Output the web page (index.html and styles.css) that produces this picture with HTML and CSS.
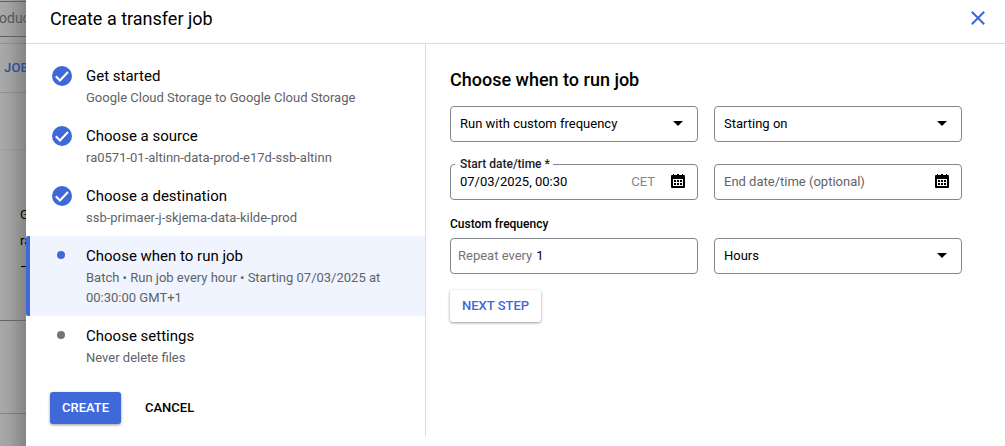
FILE: index.html
```html
<!DOCTYPE html>
<html lang="en">
<head>
<meta charset="utf-8">
<title>Create a transfer job</title>
<link rel="stylesheet" href="styles.css">
</head>
<body>
<div class="screen">
  <div class="backdrop">
    <div class="bg-row bg-filter"><span>oduc</span></div>
    <div class="bg-row bg-gap"></div>
    <div class="bg-row bg-actions"><span>E JOB</span></div>
    <div class="bg-row bg-head"></div>
    <div class="bg-row bg-item"><span class="bg-g">G</span><span class="bg-ra">ra</span><span class="bg-dash"></span></div>
    <div class="bg-row bg-foot"></div>
  </div>
  <main class="drawer">
    <header class="header">
      <h1>Create a transfer job</h1>
      <svg class="close" viewBox="0 0 14 14"><path d="M.8.8l12.4 12.4M13.2.8L.8 13.2"/></svg>
    </header>
    <div class="content">
      <nav class="sidebar">
        <section class="step">
          <svg class="check" viewBox="0 0 20 20"><circle cx="10" cy="10" r="10"/><path d="M3.8 10.3l4.2 4.2 8-8.5"/></svg>
          <div><h2>Get started</h2><p>Google Cloud Storage to Google Cloud Storage</p></div>
        </section>
        <section class="step">
          <svg class="check" viewBox="0 0 20 20"><circle cx="10" cy="10" r="10"/><path d="M3.8 10.3l4.2 4.2 8-8.5"/></svg>
          <div><h2>Choose a source</h2><p>ra0571-01-altinn-data-prod-e17d-ssb-altinn</p></div>
        </section>
        <section class="step">
          <svg class="check" viewBox="0 0 20 20"><circle cx="10" cy="10" r="10"/><path d="M3.8 10.3l4.2 4.2 8-8.5"/></svg>
          <div><h2>Choose a destination</h2><p>ssb-primaer-j-skjema-data-kilde-prod</p></div>
        </section>
        <section class="step active">
          <i class="dot"></i>
          <div><h2>Choose when to run job</h2><p>Batch • Run job every hour • Starting 07/03/2025 at<br>00:30:00 GMT+1</p></div>
        </section>
        <section class="step">
          <i class="dot"></i>
          <div><h2>Choose settings</h2><p>Never delete files</p></div>
        </section>
        <div class="actions">
          <button class="btn primary">CREATE</button>
          <button class="btn text">CANCEL</button>
        </div>
      </nav>
      <section class="form">
        <h2 class="form-title">Choose when to run job</h2>
        <div class="grid">
          <div class="field"><span>Run with custom frequency</span><svg class="arrow" viewBox="0 0 10 5"><path d="M0 0h10L5 5z"/></svg></div>
          <div class="field"><span>Starting on</span><svg class="arrow" viewBox="0 0 10 5"><path d="M0 0h10L5 5z"/></svg></div>
          <div class="field"><label class="float">Start date/time *</label><span>07/03/2025, 00:30</span><span class="zone">CET</span>
            <svg class="cal" viewBox="0 0 14 14"><path fill-rule="evenodd" d="M2 1V0h1v1h3V0h2v1h3V0h1v1h1q1 0 1 1v11q0 1-1 1H1q-1 0-1-1V2q0-1 1-1zM2 5v7h10V5z"/><path d="M3 6h2v2H3zM6 6h2v2H6zM9 6h2v2H9zM3 9h2v2H3zM6 9h2v2H6zM9 9h2v2H9z"/></svg></div>
          <div class="field"><span class="placeholder">End date/time (optional)</span>
            <svg class="cal" viewBox="0 0 14 14"><path fill-rule="evenodd" d="M2 1V0h1v1h3V0h2v1h3V0h1v1h1q1 0 1 1v11q0 1-1 1H1q-1 0-1-1V2q0-1 1-1zM2 5v7h10V5z"/><path d="M3 6h2v2H3zM6 6h2v2H6zM9 6h2v2H9zM3 9h2v2H3zM6 9h2v2H6zM9 9h2v2H9z"/></svg></div>
        </div>
        <h3>Custom frequency</h3>
        <div class="grid">
          <div class="field repeat"><span class="prefix">Repeat every</span><span>1</span></div>
          <div class="field"><span>Hours</span><svg class="arrow" viewBox="0 0 10 5"><path d="M0 0h10L5 5z"/></svg></div>
        </div>
        <button class="btn next">NEXT STEP</button>
      </section>
    </div>
  </main>
</div>
</body>
</html>
```
FILE: styles.css
```css
* { box-sizing: border-box; }
body { margin: 0; font-family: Roboto, sans-serif; font-size: 13px; color: #000; background: #fff; }
h1, h2, h3, p { margin: 0; font-weight: 400; }
.screen { display: flex; width: 1005px; height: 446px; overflow: hidden; }

.backdrop { width: 26px; flex: none; overflow: hidden; white-space: nowrap; background: linear-gradient(90deg, #a9a9a9, #a2a2a2 35%, #858585); }
.bg-row { border-bottom: 1px solid rgba(0,0,0,.13); overflow: hidden; }
.bg-filter { height: 36px; margin-top: 1px; border-top: 1px solid #5c5f62; border-bottom-color: #5c5f62; line-height: 33px; font-size: 14px; color: #555; }
.bg-filter span { margin-left: -1px; }
.bg-gap { height: 7px; }
.bg-actions { height: 49px; line-height: 48px; font-weight: 500; color: #2c4a9c; }
.bg-actions span { margin-left: -7px; letter-spacing: .2px; }
.bg-head { height: 57px; border-bottom-color: rgba(0,0,0,.06); }
.bg-item { height: 171px; border-bottom-color: #666; padding: 52px 0 0 20px; display: flex; flex-direction: column; }
.bg-g, .bg-ra { height: 26px; line-height: 26px; }
.bg-dash { width: 6px; height: 1px; margin: 12px 0 0 1px; background: #000; }
.bg-foot { height: 93px; border-bottom-color: rgba(0,0,0,.2); }

.drawer { flex: 1; background: #fff; }
.header { height: 44px; border-bottom: 1px solid #dadce0; display: flex; align-items: center; justify-content: space-between; padding: 0 20px 6px 24px; }
h1 { font-size: 18px; line-height: 24px; }
.close { width: 14px; height: 14px; margin-top: -1px; fill: none; stroke: #3c67d9; stroke-width: 2; }
.content { display: flex; }
.sidebar { width: 400px; height: 392px; flex: none; border-right: 1px solid #dadce0; padding-top: 12px; }
.step { display: flex; padding: 8px 0 8px 60px; }
.step h2 { font-size: 15px; line-height: 24px; }
.step p { line-height: 20px; color: #5f6368; }
.check { width: 20px; height: 20px; flex: none; margin: 2px 14px 0 -34px; fill: #3f69d9; }
.check path { fill: none; stroke: #fff; stroke-width: 2; }
.dot { width: 8px; height: 8px; flex: none; margin: 7px 21px 0 -29px; border-radius: 50%; background: #757575; }
.active { background: #f0f4ff; border-left: 4px solid #3f69d9; padding-left: 56px; border-radius: 2px 0 0 2px; }
.active .dot { background: #3f69d9; }

.actions { display: flex; gap: 12px; padding: 16px 0 0 24px; }
.btn { font: 500 13px Roboto, sans-serif; height: 32px; padding: 0 12px 2px; border: 0; border-radius: 3px; background: #fff; color: #000; white-space: nowrap; }
.primary { width: 71px; color: #fff; background: #3f69d9; box-shadow: 0 1px 3px rgba(0,0,0,.4); }
.next { width: 91px; margin-top: 16px; color: #3f69d9; box-shadow: 0 1px 3px rgba(0,0,0,.4); }

.form { padding: 24px 0 0 24px; }
.form-title { font-size: 18px; line-height: 24px; font-weight: 500; margin-bottom: 14px; }
.grid { display: grid; grid-template-columns: 248px 248px; gap: 22px 16px; }
.field { position: relative; display: flex; align-items: center; height: 36px; border: 1px solid #80868b; border-radius: 4px; padding: 0 14px 2px 9px; }
.field svg { margin-left: auto; }
.arrow { width: 10px; height: 5px; }
.cal { width: 14px; height: 14px; margin-right: -2px; }
.float { position: absolute; left: 4px; top: -9px; padding: 0 3px 0 5px; font-size: 12px; line-height: 16px; font-weight: 500; background: #fff; color: #202124; }
.placeholder { color: #5f6368; }
.zone { margin-left: auto; color: #80868b; }
.field .zone + .cal { margin-left: 16px; }
.repeat { padding-left: 7px; gap: 4px; }
.prefix { color: #757575; }
h3 { font-size: 12px; line-height: 16px; font-weight: 500; margin: 16px 0 6px; }
```
